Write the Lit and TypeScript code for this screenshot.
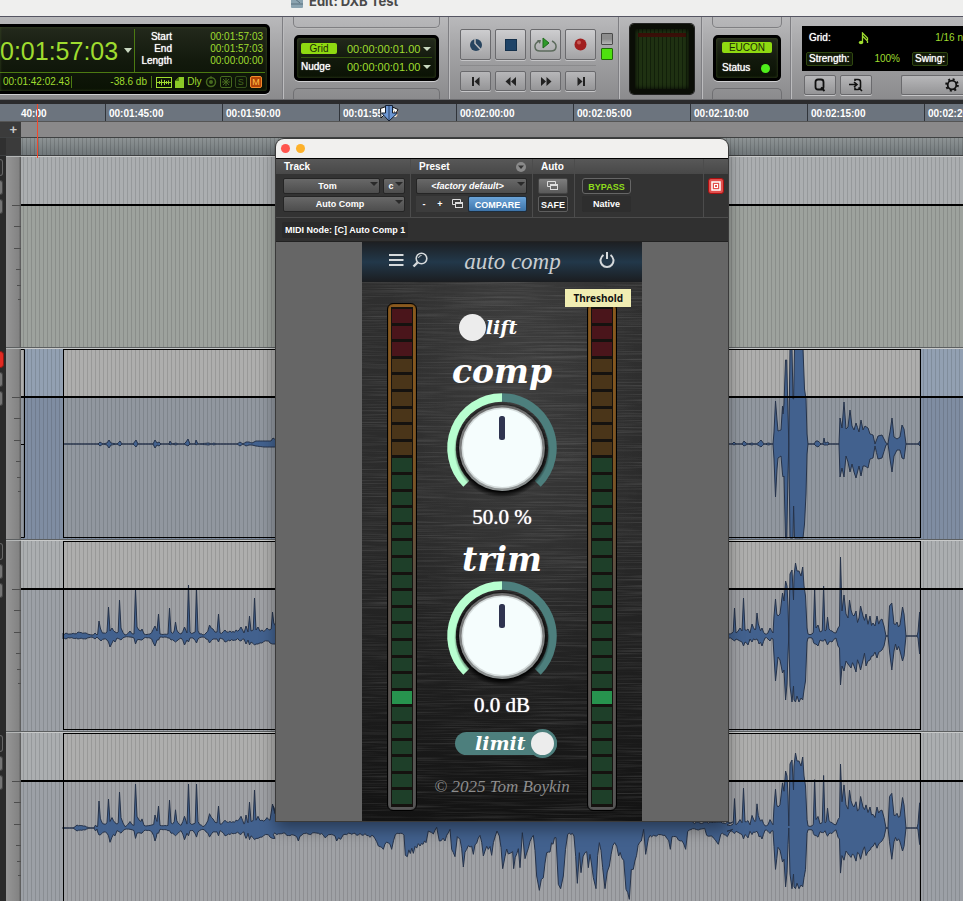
import { LitElement, html, svg, css } from "lit";
import { customElement, property, state } from "lit/decorators.js";
import { classMap } from "lit/directives/class-map.js";

type Peak = [number, number, number];

const hash = (n: number) => {
  const s = Math.sin(n * 127.1) * 43758.5453;
  return s - Math.floor(s);
};

/* Narrows lone transients so that they rise from the level of their neighbours. */
const sharpen = (peaks: Peak[]) =>
  peaks.flatMap((p, i): Peak[] => {
    const a = peaks[i - 1];
    const b = peaks[i + 1];
    if (!a || !b || p[1] < 13 || p[1] < 1.8 * Math.max(a[1], b[1])) return [p];
    const out: Peak[] = [p];
    if (p[0] - a[0] > 1.5) out.unshift([p[0] - 1.3, a[1] + 1, (a[2] + p[2]) / 2]);
    if (b[0] - p[0] > 1.5) out.push([p[0] + 1.3, b[1] + 2, (b[2] + p[2]) / 2]);
    return out;
  });

/* Peaks are [x, height above the axis, depth below the axis]. */
const outline = (peaks: Peak[], rough: number) => {
  const top: string[] = [];
  const low: string[] = [];
  peaks.forEach((p, i) => {
    top.push(`${p[0]},${96 - p[1]}`);
    low.push(`${p[0]},${96 + p[2]}`);
    const q = peaks[i + 1];
    if (!q) return;
    const steps = Math.floor((q[0] - p[0]) / 1.5);
    for (let k = 1; k < steps; k++) {
      const t = k / steps;
      const x = p[0] + (q[0] - p[0]) * t;
      const u = p[1] + (q[1] - p[1]) * t;
      const d = p[2] + (q[2] - p[2]) * t;
      const f = 1 - rough * hash(x);
      const g = 1 - rough * hash(x + 7);
      top.push(`${x.toFixed(1)},${(96 - u * f).toFixed(1)}`);
      low.push(`${x.toFixed(1)},${(96 + d * g).toFixed(1)}`);
    }
  });
  return top.concat(low.reverse()).join(" ");
};

const QUIET: Peak[] = [
  [63, 0, 0], [98, 0, 0], [100, 2, 2], [103, 0, 0], [107, 1, 1], [109, 4, 4], [111, 1, 1], [117, 0, 0], [120, 3, 2], [122, 0, 0],
  [133, 0, 0], [136, 4, 3], [138, 0, 0], [153, 0, 0], [155, 4, 4], [157, 1, 1], [159, 2, 2], [161, 0, 0], [169, 0, 0], [170, 3, 1], [172, 0, 0],
  [176, 1, 1], [178, 0, 0], [184, 0, 0], [186, 2, 1], [188, 5, 2], [190, 0, 0], [195, 0, 0], [196, 4, 1], [198, 0, 0], [209, 1, 1], [211, 0, 0],
  [214, 1, 1], [216, 0, 0], [237, 0, 0], [240, 2, 2], [243, 0, 0], [246, 2, 2], [249, 2, 1], [252, 1, 1], [256, 3, 2], [264, 3, 3], [271, 3, 3],
  [273, 6, 3], [276, 4, 3], [290, 6, 6], [700, 3, 3], [729, 0, 0], [732, 0, 0], [734, 2, 1], [736, 0, 0], [742, 0, 0], [744, 3, 2], [746, 1, 1],
  [748, 0, 0], [752, 1, 1], [755, 0, 0], [758, 1, 1], [761, 4, 3], [764, 0, 0], [769, 1, 1], [771, 0, 0], [773, 0, 0], [774, 12, 15],
  [775.5, 43, 53], [777, 24, 25], [778, 13, 14], [781, 14, 12], [782.5, 38, 30], [783, 30, 33], [784, 40, 32], [785.5, 84, 94], [786.7, 84, 94],
  [788, 30, 30], [788.8, 0, 0], [790, 95, 94], [792, 95, 94], [793, 45, 94], [793.6, 45, 62], [794.5, 95, 94], [797, 95, 94], [800, 95, 94], [803, 95, 94],
  [804.5, 55, 80], [806, 45, 50],
  [807, 10, 10], [808, 0, 0], [814, 0, 0], [816, 3, 2], [818, 3, 3], [821, 0, 0], [823, 0, 0], [824, 6, 1], [825, 1, 1], [828, 2, 1], [829, 0, 0],
  [839, 0, 0], [840, 26, 33], [842, 16, 24], [844, 42, 33], [846, 15, 12], [848, 17, 18], [850, 34, 28], [852, 18, 20], [854, 14, 28],
  [856, 21, 34], [859, 12, 22], [861, 24, 32], [863, 14, 22], [865, 18, 22], [868, 16, 24], [870, 10, 15], [873, 9, 14], [875, 0, 2],
  [878, 8, 15], [882, 9, 14], [886, 1, 1], [888, 0, 0], [889, 7, 7], [890, 12, 15], [892, 26, 28], [894, 7, 12], [897, 5, 6], [900, 7, 6],
  [902, 19, 14], [904, 15, 15], [906, 0, 0], [918, 0, 0], [920, 3, 2],
];

const VOCAL_LEFT: Peak[] = [
  [63, 3, 3], [66, 3, 3], [70, 2, 2], [78, 4, 3], [86, 3, 3], [92, 1, 1], [95, 3, 3], [97, 1, 1], [99, 15, 3], [101, 6, 5], [104, 3, 3],
  [107, 4, 4], [108.5, 29, 6], [110, 5, 11], [112, 8, 7], [115, 4, 6], [117, 3, 2], [119.5, 36, 3], [121, 8, 4], [125, 1, 1], [130, 5, 1],
  [134, 2, 2], [135.5, 47, 8], [137, 9, 4], [141, 5, 4], [142, 7, 4], [144, 2, 2], [150, 2, 2], [155, 10, 10], [157, 5, 4], [158.5, 22, 4], [160, 2, 1],
  [168, 2, 2], [169.5, 28, 2], [171, 4, 4], [175.5, 14, 6], [178, 4, 4], [181, 2, 2], [184.5, 9, 9], [187, 3, 4], [188.5, 51, 6], [190, 4, 2],
  [193, 3, 2], [196.5, 47, 7], [198, 5, 3], [203, 1, 1], [206, 3, 3], [209.5, 11, 7], [213, 7, 3], [217, 4, 3], [218.5, 22, 6], [220, 3, 2],
  [225, 6, 6], [230, 5, 5], [236, 6, 4], [241, 9, 5], [244, 3, 3], [246, 10, 8], [248, 4, 4], [249.5, 20, 9], [251, 5, 6], [254.5, 38, 9],
  [256, 6, 8], [258, 9, 8], [262, 6, 7], [267, 8, 5], [270, 6, 7], [272.5, 24, 8], [275, 11, 8], [300, 20, 14], [640, 20, 14],
];

const VOCAL_RIGHT: Peak[] = [
  [727, 3, 3], [732, 3, 3], [734.5, 28, 5], [736, 3, 3], [740, 8, 5], [742, 5, 6], [743.5, 38, 10], [745, 6, 6], [748, 7, 9], [750, 3, 3], [752, 12, 6],
  [755, 6, 4], [757, 23, 3], [759, 10, 8], [762, 8, 10], [765, 2, 2], [768, 3, 3], [770, 8, 5], [773, 3, 3], [774, 20, 20], [775.5, 37, 45],
  [778, 20, 21], [780, 22, 24], [782.5, 43, 37], [784, 35, 34], [785.6, 55, 64], [787, 50, 48], [788, 30, 18], [788.8, 0, 0], [790, 62, 50], [792, 66, 66],
  [793.5, 36, 50], [794, 60, 64], [795.5, 73, 66], [797, 65, 60], [799, 65, 66], [801, 60, 62], [802.7, 69, 64], [804, 50, 54], [805.5, 40, 45],
  [807, 8, 6], [808, 2, 2], [812, 2, 2], [813, 3, 4], [814.6, 46, 8], [816, 8, 8], [818, 11, 10], [820, 4, 4], [822, 5, 5], [823.6, 50, 5], [825, 5, 3],
  [827.5, 19, 9], [829, 7, 6], [832, 5, 6], [836, 3, 2], [838, 8, 10], [839.5, 10, 12], [840.5, 79, 49], [842, 25, 30], [844, 41, 35], [846, 22, 25],
  [848, 18, 28], [849.5, 36, 30], [851, 26, 32], [854, 20, 30], [856, 25, 36], [859, 18, 28], [860.6, 30, 34], [863, 20, 24], [866, 22, 30],
  [870, 20, 24], [873, 13, 20], [875, 10, 16], [877, 20, 22], [882, 17, 14], [884, 10, 10], [886, 0, 0], [888, 0, 0], [889.5, 30, 15],
  [891.8, 33, 34], [894, 12, 15], [897, 14, 14], [900, 11, 15], [902.5, 29, 25], [904, 22, 20], [906, 0, 0], [917, 0, 0], [918, 4, 2], [919.6, 24, 18],
];

const WIDE_LEFT: Peak[] = [
  [63, 1, 1], [66, 0, 0], [73, 0, 0], [77, 3, 3], [85, 2, 2], [90, 0, 0], [94, 0, 0], [95.5, 3, 3], [97, 1, 1], [99, 27, 7],
  ...VOCAL_LEFT.slice(9).filter((p) => p[0] < 276).map(
    (p): Peak => [p[0], p[1] > 20 ? Math.min(p[1], 44) : p[1] * 1.3, p[2] * 1.3],
  ),
];

const WIDE_MIDDLE: Peak[] = (
  [
    [10, 105], [20, 106], [50, 108], [80, 112], [85, 125], [95, 108], [150, 105], [165, 115], [185, 105], [200, 125], [212, 120], [220, 106], [260, 108],
    [280, 108], [300, 114], [315, 118], [325, 140], [340, 150], [350, 128], [365, 150], [376, 106], [402, 108], [406, 168], [412, 172], [430, 162],
    [450, 140], [468, 130], [475, 95], [490, 104], [500, 84], [508, 125], [525, 125], [540, 90], [545, 150], [555, 172], [562, 112], [570, 120],
    [580, 203], [590, 150], [610, 165], [630, 108], [640, 170], [655, 150], [665, 168], [681, 95], [688, 110], [698, 208], [705, 172], [720, 162],
    [728, 157], [731, 208], [745, 148], [750, 205], [757, 100], [765, 178], [790, 108], [800, 230], [808, 273], [820, 235], [830, 160], [840, 158],
    [858, 115], [865, 255], [872, 268], [880, 230], [893, 105], [912, 110], [922, 252], [928, 160], [933, 220], [945, 160], [955, 205], [960, 165],
    [970, 235], [978, 268], [988, 130], [998, 205], [1005, 268], [1018, 200], [1034, 130], [1046, 170], [1055, 175], [1068, 270], [1078, 300],
    [1090, 210], [1114, 125], [1121, 90], [1127, 165], [1135, 118], [1160, 110], [1185, 108], [1201, 150], [1206, 112], [1225, 122], [1247, 150],
    [1253, 96], [1268, 88], [1285, 92], [1304, 87], [1310, 108], [1345, 135], [1352, 106], [1372, 112], [1388, 90],
  ] as [number, number][]
).map(([x, y]): Peak => {
  const px = 270 + x / 3;
  return [px, px < 640 ? 22 : px < 690 ? 10 : 6, (y - 86) / 3];
});

const WIDE_RIGHT: Peak[] = VOCAL_RIGHT.map(([x, u, d]): Peak => [x, x > 785 && x < 805 ? u + 2 : Math.min(u * 1.05, 64), x > 770 ? d * 0.92 : d * 1.1]);

interface TrackData {
  tone: string;
  armed?: boolean;
  clip: boolean;
  wave?: string;
}

const TRACKS: TrackData[] = [
  { tone: "aux", clip: false },
  { tone: "selected", armed: true, clip: true, wave: outline(QUIET, 0) },
  { tone: "plain", clip: true, wave: outline(sharpen([...VOCAL_LEFT, ...VOCAL_RIGHT]), 0.45) },
  { tone: "plain", clip: true, wave: outline(sharpen([...WIDE_LEFT, ...WIDE_MIDDLE, ...WIDE_RIGHT]), 0.3) },
];

@customElement("track-lane")
class TrackLane extends LitElement {
  @property({ attribute: false }) track!: TrackData;

  static styles = css`
    :host { display: flex; height: 192px; flex: none; }
    .strip { width: 6px; background: #2a2a2a; display: flex; flex-direction: column; gap: 4px; padding-top: 3px; box-sizing: border-box; }
    .strip button { all: unset; box-sizing: border-box; width: 3px; height: 15px; border-radius: 0 4px 4px 0; background: #747474; border: 1px solid #444; border-left: 0; }
    .strip button:first-child { background: #2d2d2d; border-color: #666; height: 17px; }
    .strip button.armed { background: #e32a22; border-color: #8b1a16; width: 4px; }
    .scale { width: 15px; background: linear-gradient(90deg, #969696, #838383 85%, #555); }
    .lane { flex: 1; min-width: 0; }
    svg { display: block; }
    .tick { stroke: #4d4d4d; }
    .head { fill: #abaeb0; }
    .body { fill: #9ca0a6; }
    .clip-head { fill: #aeaead; }
    .clip-body { fill: #9fa1a5; }
    .aux .body { fill: #9da29d; }
    .selected .head { fill: #92a0b2; }
    .selected .body { fill: #7f8da2; }
    .selected .clip-body { fill: #91979f; }
    .frame { fill: none; stroke: #000; }
    .wave { fill: #42618e; stroke: #26334a; stroke-width: 1; stroke-linejoin: round; }
    .stripe { fill: #000; opacity: 0.12; }
  `;

  render() {
    const t = this.track;
    return html`
      <div class="strip">
        <button class=${classMap({ armed: !!t.armed })} aria-label="Record enable"></button>
        <button aria-label="Track view"></button>
        <button aria-label="Automation mode"></button>
      </div>
      <svg class="scale" height="192">
        ${[[49, 6], [70, 8], [92, 8], [113, 10], [129, 11], [143, 12]].map(([y, x]) => svg`<path class="tick" d="M${x} ${y}.5H15"/>`)}
        <path stroke="#5c5f60" d="M0 191.5H15" /><path stroke="#b4b6b6" d="M0 .5H15" />
      </svg>
      <div class="lane ${t.tone}">
        <svg width="100%" height="192">
          <defs>
            <pattern id="grid" width="4" height="192" patternUnits="userSpaceOnUse"><rect class="stripe" x="2" width="1" height="192" /></pattern>
          </defs>
          <rect class="head" width="100%" height="48" />
          <rect class="body" y="48" width="100%" height="144" />
          ${t.clip
            ? svg`<rect class="clip-head" x="42" y="1" width="858" height="47"/><rect class="clip-body" x="42" y="48" width="858" height="142"/>`
            : ""}
          ${t.armed
            ? svg`<rect class="clip-head" width="3" y="1" height="47"/><rect class="clip-body" width="3" y="48" height="142"/>`
            : ""}
          <rect width="100%" height="192" fill="url(#grid)" />
          ${t.armed ? svg`<path class="frame" d="M0 1.5H3.5V189.5H0M0 96.5H3"/>` : ""}
          ${t.wave ? svg`<polygon class="wave" points=${t.wave} transform="translate(-21 0)"/>` : ""}
          ${t.clip ? svg`<rect class="frame" x="42.5" y="1.5" width="857" height="188"/>` : ""}
          <rect y="48" width="100%" height="2" />
          <rect width="100%" height="1" fill="#c8caca" />
          <rect y="191" width="100%" height="1" fill="#5c5f60" />
        </svg>
      </div>
    `;
  }
}

@customElement("level-meter")
class LevelMeter extends LitElement {
  @property({ type: Number }) peak = 23;

  static styles = css`
    :host { display: block; box-sizing: border-box; width: 30px; border: 1px solid #000; border-radius: 6px; background: linear-gradient(#8a5a1e, #7a5526 35%, #5a5048 55%, #565656); padding: 3px; box-shadow: inset 0 0 1px #000; }
    .cells { height: 100%; box-sizing: border-box; background: #15120f; display: grid; grid-auto-rows: 1fr; gap: 3px; padding: 2px 1px 3px; }
    .red { background: #4a151b; }
    .amber { background: #4a3519; }
    .green { background: #1e3f29; }
    .on { background: #27934e; }
  `;

  render() {
    return html`<div class="cells">
      ${Array.from({ length: 30 }, (_, i) => html`<div class=${i === this.peak ? "on" : i < 3 ? "red" : i < 9 ? "amber" : "green"}></div>`)}
    </div>`;
  }
}

@customElement("rotary-knob")
class RotaryKnob extends LitElement {
  @property() name = "";
  @property({ type: Number }) value = 50;

  static styles = css`
    :host { display: block; position: relative; width: 110px; height: 110px; }
    svg { display: block; overflow: visible; }
    input { position: absolute; inset: 0; width: 100%; height: 100%; margin: 0; opacity: 0; }
  `;

  render() {
    return html`
      <svg width="110" height="110" viewBox="0 0 110 110">
        <defs>
          <radialGradient id="halo"><stop offset=".86" stop-color="#000" /><stop offset="1" stop-color="#000" stop-opacity="0" /></radialGradient>
          <linearGradient id="rim" x1="0" y1="0" x2="0" y2="1"><stop offset="0" stop-color="#6b6b6b" /><stop offset="1" stop-color="#8d9292" /></linearGradient>
        </defs>
        <path d="M19.3 90.7A50.5 50.5 0 0 1 55 4.5" fill="none" stroke="#b8ffd0" stroke-width="8.5" />
        <path d="M55 4.5A50.5 50.5 0 0 1 90.7 90.7" fill="none" stroke="#4d7f7d" stroke-width="8.5" />
        <circle cx="55" cy="57" r="48" fill="url(#halo)" />
        <circle cx="55" cy="55" r="43" fill="url(#rim)" />
        <circle cx="55" cy="55" r="40.5" fill="#d5dcdc" />
        <circle cx="55" cy="55" r="39" fill="#f5fdfd" />
        <rect x="52" y="23" width="6" height="24" rx="2.5" fill="#2f3450" />
      </svg>
      <input type="range" min="0" max="100" .value=${String(this.value)} aria-label=${this.name} />
    `;
  }
}

@customElement("plugin-window")
class PluginWindow extends LitElement {
  @state() private lift = false;
  @state() private limit = true;

  static styles = css`
    :host { display: block; background: #333; border-radius: 8px 8px 0 0; overflow: hidden; color: #fff; font: bold 9px/16px "Liberation Sans", Arial, sans-serif; box-shadow: 0 0 0 1px #3a3a3a, 0 8px 16px #0006; }
    button, select { font: inherit; color: inherit; margin: 0; border: 0; padding: 0; }
    .bar { height: 19px; background: #f1f0ee; border-bottom: 1px solid #000; display: flex; align-items: center; gap: 6px; padding-left: 5px; }
    .bar button { width: 9px; height: 9px; border-radius: 5px; background: #ff544d; }
    .bar button.min { background: #fdb12a; }
    .controls { display: grid; grid-template-columns: 135px 122px 42px 1fr 24px; height: 58px; border-bottom: 1px solid #4c4c4c; }
    .col { border-right: 1px solid #4c4c4c; min-width: 0; }
    .col:last-child { border-right: 0; }
    h3 { margin: 0; height: 15px; font-size: 10px; line-height: 16px; padding: 0 6px 0 8px; background: linear-gradient(#585858, #484848); display: flex; justify-content: space-between; align-items: center; }
    .rows { padding: 4px 5px 0 7px; display: grid; gap: 2px; }
    .row { display: flex; gap: 3px; height: 16px; }
    .drop { position: relative; flex: 1; min-width: 0; display: flex; }
    .drop.small { flex: 0 0 22px; }
    .drop select { appearance: none; width: 100%; height: 16px; text-align: center; text-align-last: center; padding: 0 10px 0 2px; background: linear-gradient(#686868, #4d4d4d); border: 1px solid #252525; border-radius: 2px; line-height: 14px; }
    .drop.small select { padding: 0 8px 0 2px; }
    .drop.i select { font-style: italic; }
    .drop::after { content: ""; position: absolute; right: 2px; top: 4px; border: 4px solid transparent; border-top-color: #2a2a2a; border-bottom: 0; }
    .preset { padding-left: 5px; }
    .preset .row { gap: 0; }
    .flat { width: 16px; background: #3c3c3c; }
    .wide { width: 20px; display: grid; place-items: center; }
    .compare { flex: 1; border-radius: 2px; background: linear-gradient(#6aa3d8, #3d74a9); border: 1px solid #1f2d3b; }
    .auto { padding: 4px 6px 0 5px; }
    .auto button { height: 16px; border-radius: 2px; border: 1px solid #5e5e5e; background: #2d2d2d; display: grid; place-items: center; }
    .auto .up { background: linear-gradient(#7d7d7d, #5a5a5a); border-color: #444; }
    .mode { justify-content: start; grid-auto-columns: 49px; }
    .bypass { height: 16px; border: 1px solid #666; border-radius: 3px; background: #2b2b2b; color: #8fdc1c; }
    .native { height: 16px; text-align: center; background: #2e2e2e; border-radius: 2px; }
    .target { padding: 4px 0 0 4px; }
    .target button { width: 16px; height: 16px; border-radius: 3px; background: #e2504e; border: 1px solid #a11; display: grid; place-items: center; }
    .node { height: 24px; padding: 4px 6px 0; box-sizing: border-box; background: #303030; border-bottom: 1px solid #222; }
    .node span { display: inline-block; padding: 0 3px; background: #2a2a2a; border-radius: 2px; }
    .stage { background: #666; display: flex; justify-content: center; }
    .panel { width: 280px; position: relative; isolation: isolate; font-family: "Liberation Serif", Georgia, serif; background: radial-gradient(ellipse at 55% 25%, #ffffff14, transparent 60%), linear-gradient(#303030, #2a2a2a 50%, #131313); }
    .grain { position: absolute; inset: 0; z-index: -1; }
    header { height: 40px; background: linear-gradient(#1d1f22, #22384a 50%, #1b1d20); display: grid; grid-template-columns: 91px 1fr 70px; align-items: center; color: #d6dadc; }
    header h2 { margin: 0; text-align: center; font: italic 23px/40px "Liberation Serif", Georgia, serif; color: #c9cdd0; }
    header .tools { display: flex; gap: 8px; padding-left: 26px; }
    header button { background: none; display: block; }
    header .power { justify-self: center; }
    .work { display: flex; justify-content: space-between; padding: 21px 25px 10px; }
    .center { display: flex; flex-direction: column; align-items: center; padding: 11px 0 12px; font-weight: normal; }
    .toggle { display: flex; align-items: center; cursor: pointer; }
    .toggle input { appearance: none; margin: 0; flex: none; border-radius: 50%; background: #ececec; }
    .toggle span { font: italic bold 19px/27px "DejaVu Serif", Georgia, serif; }
    .lift { margin-right: 28px; height: 27px; }
    .lift input { width: 27px; height: 27px; }
    .limit { position: relative; height: 29px; margin-top: 10px; padding-left: 20px; width: 102px; box-sizing: border-box; justify-content: space-between; margin-left: 8px; }
    .limit::before { content: ""; position: absolute; inset: 3px 0; border-radius: 12px; background: #4d7f7d; z-index: -1; }
    .limit input { width: 29px; height: 29px; border: 3px solid #4d7f7d; }
    .center h4 { margin: 11px 0 1px; font: italic bold 33px/40px "DejaVu Serif", Georgia, serif; }
    .center h4.second { margin-top: 9px; }
    output { font-size: 21px; line-height: 28px; text-shadow: 0 0 1px #fff; }
    footer { font-style: italic; font-size: 17px; line-height: 24px; color: #8d8d8d; margin-top: 17px; white-space: nowrap; }
    .tip { position: absolute; right: 11px; top: 47px; background: #f0edb2; color: #111; font: 700 10px/18px "Noto Sans", "DejaVu Sans", sans-serif; padding: 0 8px; }
  `;

  render() {
    const windows = html`<svg width="12" height="10" viewBox="0 0 12 10" fill="none" stroke="#ddd"><path d="M3.500 5.500H.5V.5H8.500V3" /><rect x="3.500" y="3.500" width="7" height="5" /><path d="M3.500 4.500H10.500" /></svg>`;
    return html`
      <div class="bar"><button aria-label="Close"></button><button class="min" aria-label="Minimize"></button></div>
      <div class="controls">
        <div class="col">
          <h3>Track</h3>
          <div class="rows">
            <div class="row">
              <div class="drop"><select aria-label="Track"><option>Tom</option></select></div>
              <div class="drop small"><select aria-label="Insert"><option>c</option></select></div>
            </div>
            <div class="row"><div class="drop"><select aria-label="Plug-in"><option>Auto Comp</option></select></div></div>
          </div>
        </div>
        <div class="col">
          <h3>Preset <svg width="10" height="10"><circle cx="5" cy="5" r="5" fill="#8a8a8a" /><path d="M2 3.500H8L5 7Z" fill="#333" /></svg></h3>
          <div class="rows preset">
            <div class="row"><div class="drop i"><select aria-label="Preset"><option>&lt;factory default&gt;</option></select></div></div>
            <div class="row">
              <button class="flat">-</button><button class="flat">+</button>
              <button class="flat wide" aria-label="Copy settings">${windows}</button>
              <button class="compare">COMPARE</button>
            </div>
          </div>
        </div>
        <div class="col">
          <h3>Auto</h3>
          <div class="rows auto"><button class="up" aria-label="Automation">${windows}</button><button>SAFE</button></div>
        </div>
        <div class="col">
          <h3></h3>
          <div class="rows mode"><button class="bypass">BYPASS</button><div class="native">Native</div></div>
        </div>
        <div class="col">
          <h3></h3>
          <div class="target"><button aria-label="Target"><svg width="10" height="10" fill="none" stroke="#fff"><rect x="1" y="1" width="8" height="8" stroke-width="1.500" /><rect x="3.500" y="3.500" width="3" height="3" /></svg></button></div>
        </div>
      </div>
      <div class="node"><span>MIDI Node: [C] Auto Comp 1</span></div>
      <div class="stage">
        <div class="panel">
          <svg class="grain" width="100%" height="100%" aria-hidden="true">
            <filter id="brush" x="0" y="0" width="100%" height="100%">
              <feTurbulence type="fractalNoise" baseFrequency="0.012 0.7" numOctaves="3" seed="4" />
              <feColorMatrix values="0 0 0 0 1  0 0 0 0 1  0 0 0 0 1  1.6 0 0 0 -0.7" />
            </filter>
            <rect width="100%" height="100%" filter="url(#brush)" opacity="0.16" />
          </svg>
          <header>
            <div class="tools">
              <button aria-label="Menu"><svg width="16" height="16" stroke="#d6dadc" stroke-width="2"><path d="M1 3H15.500M1 8H15.500M1 13H15.500" /></svg></button>
              <button aria-label="Search"><svg width="16" height="16" fill="none" stroke="#d6dadc"><circle cx="9.500" cy="6.500" r="5.300" stroke-width="1.600" /><path d="M6.500 6A3 3 0 0 1 9.500 3.500" /><path d="M5.500 10.500L1.500 14.500" stroke-width="2.400" /></svg></button>
            </div>
            <h2>auto comp</h2>
            <button class="power" aria-label="Power"><svg width="18" height="18" fill="none" stroke="#d6dadc" stroke-width="2"><path d="M5.500 4A6.500 6.500 0 1 0 12.500 4M9 1V8" /></svg></button>
          </header>
          <div class="work">
            <level-meter></level-meter>
            <div class="center">
              <label class="toggle lift"><input type="checkbox" .checked=${this.lift} @change=${() => (this.lift = !this.lift)} /><span>lift</span></label>
              <h4>comp</h4>
              <rotary-knob name="comp"></rotary-knob>
              <output>50.0 %</output>
              <h4 class="second">trim</h4>
              <rotary-knob name="trim"></rotary-knob>
              <output>0.0 dB</output>
              <label class="toggle limit"><span>limit</span><input type="checkbox" .checked=${this.limit} @change=${() => (this.limit = !this.limit)} /></label>
              <footer>© 2025 Tom Boykin</footer>
            </div>
            <level-meter></level-meter>
          </div>
          <div class="tip" role="tooltip">Threshold</div>
        </div>
      </div>
    `;
  }
}

@customElement("app-root")
class AppRoot extends LitElement {
  static styles = css`
    :host { display: flex; flex-direction: column; height: 100vh; overflow: hidden; position: relative; background: #2a2a2a; font: 10px/12px "Liberation Sans", Arial, sans-serif; color: #9fdc2f; }
    button, select { font: inherit; color: inherit; margin: 0; border: 0; padding: 0; background: none; }
    .title { flex: none; height: 16px; background: #efefee; color: #4a4a4a; display: flex; gap: 6px; padding-left: 291px; }
    .title h1 { margin: -7px 0 0; font: bold 13px/16px Inter, "Liberation Sans", sans-serif; }
    .title svg { margin-top: -6px; }
    .tools { flex: none; height: 84px; box-sizing: border-box; border-top: 1px solid #555562; border-bottom: 1px solid #6d6d70; background: linear-gradient(#b9b9bb, #a4a4a6 40%, #8b8b8d); display: flex; }
    .group { box-sizing: border-box; flex: none; border-right: 1px solid #7e7e82; box-shadow: 1px 0 #bcbcbe; }
    .lcd { background: linear-gradient(#23291c, #12190c 55%, #0a1204); border: 3px solid #000; border-radius: 5px; box-sizing: border-box; box-shadow: 0 1px #cfcfd1, inset 0 0 3px #3a4a22; }
    .white { color: #fff; text-shadow: 0 0 1px #fff; }
    .main { width: 283px; padding: 7px 12px 0 0; }
    .counter { height: 70px; border-left: 0; border-radius: 0 5px 5px 0; display: grid; grid-template-columns: 135px 1fr; grid-template-rows: 45px 1fr; }
    .now { display: flex; align-items: center; font-size: 25px; line-height: 40px; border-right: 1px solid #4c7a12; gap: 6px; margin-top: 2px; }
    .caret { width: 0; height: 0; border: 4px solid transparent; border-top: 5px solid #c9d8c0; border-bottom: 0; }
    .sel { margin: 0; display: grid; grid-template-columns: 37px 1fr; padding: 4px 4px 0 0; text-align: right; align-content: start; }
    .sel dt, .sel dd { margin: 0; }
    .status { grid-column: 1 / -1; border-top: 1px solid #4c7a12; display: flex; align-items: center; padding: 0 3px; margin-right: 2px; }
    .status .pos { border-right: 1px solid #4c7a12; width: 68px; }
    .status .db { border-right: 1px solid #4c7a12; width: 75px; padding-right: 4px; text-align: right; margin-right: 4px; }
    .icons { display: flex; align-items: center; flex: 1; justify-content: space-between; }
    .sq { width: 12px; height: 12px; box-sizing: border-box; border: 1px solid #35501a; border-radius: 2px; color: #46691f; text-align: center; font-size: 9px; line-height: 10px; }
    .sq.mute { background: #b24407; border-color: #f08a2c; color: #ffc04a; }
    .gridbox { width: 166px; padding: 0 8px 0 10px; display: flex; flex-direction: column; justify-content: space-between; }
    .edge { height: 10px; border: 1px solid #7f7f82; border-top: 0; border-radius: 0 0 5px 5px; box-shadow: 0 1px #bbb; }
    .edge.low { border: 1px solid #6f6f72; border-bottom: 0; border-radius: 5px 5px 0 0; box-shadow: none; }
    .nudge { height: 46px; padding: 3px 4px; display: grid; grid-template-columns: 36px 1fr; margin: 0 1px; align-items: center; }
    .chip { background: #8fd911; color: #1c2b05; border-radius: 2px; text-align: center; height: 11px; line-height: 11px; }
    .drop { position: relative; justify-self: end; font-size: 11px; }
    .drop select { appearance: none; padding-right: 11px; height: 14px; display: block; }
    .drop::after { content: ""; position: absolute; right: 1px; top: 5px; border: 4px solid transparent; border-top-color: #c9d8c0; border-bottom: 0; }
    .rule { grid-column: 1 / -1; height: 1px; background: #35540f; }
    .transport { width: 170px; padding: 12px 5px 0 11px; display: grid; grid-template-columns: 136px 12px; column-gap: 5px; align-content: start; }
    .keys { display: grid; grid-template-columns: repeat(4, 31px); column-gap: 4px; }
    .key { height: 31px; box-sizing: border-box; border: 1px solid #6a6a6d; border-radius: 2px; background: linear-gradient(#cdcdcf, #a3a3a5); display: grid; place-items: center; box-shadow: 0 1px #c6c6c8; color: #222; }
    .keys.low { margin-top: 5px; border-top: 1px solid #8a8a8c; padding-top: 5px; }
    .keys.low .key, .quant .key { height: 20px; background: linear-gradient(#b7b7b9, #959597); }
    .leds { display: grid; gap: 3px; align-content: start; padding-top: 4px; }
    .led { height: 12px; box-sizing: border-box; border: 1px solid #4a4a4a; border-radius: 1px; background: linear-gradient(#8c8c8c 50%, #b5b5b5); }
    .led.on { background: #4ee00f; border-color: #226b08; }
    .meter { width: 83px; padding: 7px 7px 0 11px; }
    .scope { height: 70px; border: 5px solid #0a0d06; border-radius: 4px; background: linear-gradient(#3a0f08 0 4px, transparent 4px) 50% 4px / 48px 4px no-repeat, repeating-linear-gradient(90deg, #1f3112 0 3px, #12200a 3px 4px); box-shadow: 0 0 0 1px #222, inset 0 0 5px #000; }
    .eucon { width: 89px; padding: 0 8px 0 10px; display: flex; flex-direction: column; justify-content: space-between; }
    .euc { height: 46px; padding: 4px 6px; display: flex; flex-direction: column; justify-content: space-between; margin: 0 1px; }
    .euc div { display: flex; justify-content: space-between; align-items: center; }
    .euc .dot { width: 9px; height: 9px; border-radius: 5px; background: #4fee1b; margin-right: 2px; }
    .quant { flex: 1; min-width: 0; padding: 9px 0 0 11px; }
    .qpanel { background: #000; height: 45px; box-sizing: border-box; padding: 5px 0 5px 4px; overflow: hidden; display: grid; grid-template-columns: 46px 48px 1fr; row-gap: 6px; align-items: center; white-space: nowrap; }
    .qpanel .box { border: 1px solid #2f4710; border-radius: 2px; padding: 0 2px; background: #101806; justify-self: start; }
    .qpanel .swing { margin-left: 12px; }
    .qpanel .name { padding-left: 3px; }
    .qpanel .note { justify-self: center; margin-right: 24px; }
    .qpanel .r { text-align: right; }
    .qrow { display: flex; gap: 4px; margin: 4px 0 0 2px; }
    .qrow .key { width: 32px; }
    .qrow .gear { flex: 1; margin-left: 25px; border-right: 0; border-radius: 2px 0 0 2px; padding-left: 38px; }
    .ruler { flex: none; border-top: 4px solid #2b2b2d; height: 17px; background: #6c747e; display: flex; color: #fff; font-weight: bold; line-height: 19px; overflow: hidden; white-space: nowrap; }
    .ruler span { flex: none; box-sizing: border-box; width: 117px; border-left: 1px solid #30343a; padding-left: 3px; }
    .ruler span:first-child { width: 105px; border: 0; padding-left: 21px; }
    .sub { flex: none; display: flex; height: 17px; background: #8a898a; box-sizing: border-box; border-top: 1px solid #555; border-bottom: 1px solid #3f4142; }
    .sub .corner { width: 21px; box-sizing: border-box; background: #3b3b3b; color: #c9c9c9; font: bold 13px/14px "Liberation Sans", sans-serif; text-align: right; padding-right: 4px; }
    .sub.markers { height: 18px; border-top: 0; background: repeating-linear-gradient(90deg, #0000 0 2px, #0002 2px 3px, #0000 3px 4px), linear-gradient(#8d9394, #70777a); }
    .sub.markers .corner { border-left: 6px solid #303030; }
    .plugin { position: absolute; left: 276px; top: 139px; width: 452px; }
    .playhead { position: absolute; left: 37px; top: 104px; width: 1px; height: 54px; background: #f4472a; z-index: 1; }
    .cursor { position: absolute; left: 380px; top: 105px; }
  `;

  render() {
    const times = ["40:00", "00:01:45:00", "00:01:50:00", "00:01:55:00", "00:02:00:00", "00:02:05:00", "00:02:10:00", "00:02:15:00", "00:02:20:00"];
    return html`
      <div class="title">
        <svg width="12" height="15"><rect width="12" height="14" rx="1" fill="#8ba3b0" /><path d="M0 10H12M3 4L9 9" stroke="#5b717e" /></svg>
        <h1>Edit: DXB Test</h1>
      </div>
      <div class="tools">
        <div class="group main">
          <div class="lcd counter">
            <div class="now">0:01:57:03 <i class="caret"></i></div>
            <dl class="sel">
              <dt class="white">Start</dt><dd>00:01:57:03</dd>
              <dt class="white">End</dt><dd>00:01:57:03</dd>
              <dt class="white">Length</dt><dd>00:00:00:00</dd>
            </dl>
            <div class="status">
              <span class="pos">00:01:42:02.43</span><span class="db">-38.6 db</span>
              <div class="icons">
                <svg width="16" height="11" fill="none" stroke="#9fdc2f"><rect x=".5" y=".5" width="15" height="10" /><path d="M1 5.500H15M3.500 4V7M5.500 2.500V8.500M8.500 3V8M10.500 4V7M12.500 3.500V7.500" /></svg>
                <svg width="9" height="11"><path d="M4 0H9V11H0V4Z" fill="#8bc926" /><path d="M0 4L4 0V4Z" fill="#4f7a12" /></svg>
                <span>Dly</span>
                <svg width="12" height="12" fill="none" stroke="#46691f"><circle cx="6" cy="6" r="4.500" stroke-width="1.500" /><circle cx="6" cy="6" r="1" stroke-width="2" /><path d="M6 0V3" /></svg>
                <svg width="12" height="12" fill="none" stroke="#46691f"><rect x=".5" y=".5" width="11" height="11" rx="1.500" /><path d="M6 2V10M2 6H10M3 3L9 9M9 3L3 9" /></svg>
                <span class="sq">S</span><span class="sq mute">M</span>
              </div>
            </div>
          </div>
        </div>
        <div class="group gridbox">
          <div class="edge"></div>
          <div class="lcd nudge">
            <button class="chip">Grid</button>
            <div class="drop"><select aria-label="Grid value"><option>00:00:00:01.00</option></select></div>
            <div class="rule"></div>
            <span class="white">Nudge</span>
            <div class="drop"><select aria-label="Nudge value"><option>00:00:00:01.00</option></select></div>
          </div>
          <div class="edge low"></div>
        </div>
        <div class="group transport">
          <div class="keys">
            <button class="key" aria-label="Online"><svg width="14" height="14"><circle cx="7" cy="7" r="6" fill="#27445f" /><path d="M6 0V5.500L12.500 12.500" fill="none" stroke="#b9b9bb" stroke-width="1.500" /></svg></button>
            <button class="key" aria-label="Stop"><svg width="12" height="12"><rect width="11" height="11" x=".5" y=".5" fill="#1f4468" stroke="#14304b" /></svg></button>
            <button class="key" aria-label="Play"><svg width="23" height="17" fill="none"><path d="M5 5C-1 8 0 15 6 15H17C23 15 24 8 18 5" stroke="#5c6b5c" stroke-width="1.500" /><path d="M3 4L7 4L6 8Z" fill="#5c6b5c" /><path d="M9 2L15 7L9 12Z" fill="#2f9a2a" stroke="#1e6b1b" /></svg></button>
            <button class="key" aria-label="Record"><svg width="13" height="13"><circle cx="6.500" cy="6.500" r="6" fill="#a11f1f" /><circle cx="5" cy="4.500" r="2" fill="#c75a55" /></svg></button>
          </div>
          <div class="leds"><div class="led"></div><div class="led on"></div></div>
          <div class="keys low">
            <button class="key" aria-label="Return to zero"><svg width="10" height="9" fill="#222"><path d="M1 0H3V9H1ZM8.500 0V9L3.500 4.500Z" /></svg></button>
            <button class="key" aria-label="Rewind"><svg width="12" height="9" fill="#222"><path d="M5.500 0V9L.5 4.500ZM11 0V9L6 4.500Z" /></svg></button>
            <button class="key" aria-label="Fast forward"><svg width="12" height="9" fill="#222"><path d="M1 0V9L6 4.500ZM6.500 0V9L11.500 4.500Z" /></svg></button>
            <button class="key" aria-label="Go to end"><svg width="10" height="9" fill="#222"><path d="M7 0H9V9H7ZM1.500 0V9L6.500 4.500Z" /></svg></button>
          </div>
        </div>
        <div class="group meter"><div class="lcd scope"></div></div>
        <div class="group eucon">
          <div class="edge"></div>
          <div class="lcd euc">
            <button class="chip">EUCON</button>
            <div><span class="white">Status</span><i class="dot"></i></div>
          </div>
          <div class="edge low"></div>
        </div>
        <div class="quant">
          <div class="qpanel">
            <span class="white name">Grid:</span>
            <svg class="note" width="12" height="13" fill="none" stroke="#9fdc2f"><path d="M4.500 10V1L9.500 6V8M4.500 4L9.500 9V11" stroke-width="1.300" /><ellipse cx="3" cy="10.500" rx="2.200" ry="1.700" fill="#9fdc2f" stroke="none" /></svg>
            <span class="r">1/16 n</span>
            <span class="white box">Strength:</span><span class="r">100%</span>
            <span class="white box swing">Swing:</span>
          </div>
          <div class="qrow">
            <button class="key" aria-label="Quantize"><svg width="12" height="14" fill="none" stroke="#111" stroke-width="1.800"><path d="M4 1.500H7Q9.500 1.500 9.500 4V9Q9.500 11.500 7 11.500H4Q1.500 11.500 1.500 9V4Q1.500 1.500 4 1.500ZM7 9.500L10.500 13" /></svg></button>
            <button class="key" aria-label="Apply quantize"><svg width="14" height="14" fill="none" stroke="#111" stroke-width="1.600"><path d="M6 3V1.500H9Q11.500 1.500 11.500 4V9Q11.500 11.500 9 11.500H6V9.500M9.500 9.500L13 13M0 6.500H7M5 4L8 6.500L5 9" /></svg></button>
            <button class="key gear" aria-label="Settings"><svg width="14" height="14" fill="none" stroke="#111"><circle cx="7" cy="7" r="4.300" stroke-width="1.800" /><circle cx="7" cy="7" r="5.800" stroke-width="2" stroke-dasharray="2 2.550" /></svg></button>
          </div>
        </div>
      </div>
      <div class="ruler">${times.map((t) => html`<span>${t}</span>`)}</div>
      <div class="sub"><button class="corner" aria-label="Add marker">+</button></div>
      <div class="sub markers"><div class="corner"></div></div>
      ${TRACKS.map((t) => html`<track-lane .track=${t}></track-lane>`)}
      <div class="playhead"></div>
      <svg class="cursor" width="19" height="17"><path d="M.5 3.500L6 1.500V8L1 13ZM12.500 2L18 4.500L16 8" fill="#fff" stroke="#111" /><path d="M5.500 .5H12.500V8H17.500L9 16L1.500 8H5.500Z" fill="#6d97d3" stroke="#152033" /><path d="M9 1V15" stroke="#2a4166" /></svg>
      <plugin-window class="plugin"></plugin-window>
    `;
  }
}
